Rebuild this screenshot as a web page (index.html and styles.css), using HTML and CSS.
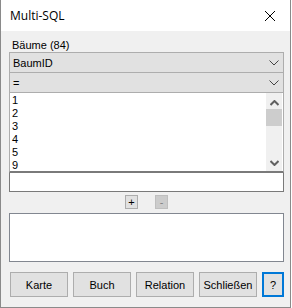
FILE: index.html
```html
<!DOCTYPE html>
<html lang="de">
<head>
    <meta charset="UTF-8">
    <title>Multi-SQL</title>
    <link rel="stylesheet" href="styles.css">
</head>
<body>
    <div class="window">
        <div class="titlebar">
            <span class="title">Multi-SQL</span>
            <svg class="close" width="12" height="12" viewBox="0 0 12 12">
                <path d="M1 1L11 11M11 1L1 11" stroke="#000" stroke-width="1"/>
            </svg>
        </div>
        <div class="content">
            <div class="caption">Bäume (84)</div>
            <div class="combo">
                <span>BaumID</span>
                <svg width="10" height="6" viewBox="0 0 10 6"><path d="M0.5 0.5L5 5L9.5 0.5" fill="none" stroke="#444"/></svg>
            </div>
            <div class="combo">
                <span>=</span>
                <svg width="10" height="6" viewBox="0 0 10 6"><path d="M0.5 0.5L5 5L9.5 0.5" fill="none" stroke="#444"/></svg>
            </div>
            <div class="listbox">
                <ul class="items">
                    <li>1</li>
                    <li>2</li>
                    <li>3</li>
                    <li>4</li>
                    <li>5</li>
                    <li>9</li>
                </ul>
                <div class="scrollbar">
                    <svg class="arrow" width="9" height="6" viewBox="0 0 9 6"><path d="M0.5 5L4.5 1L8.5 5" fill="none" stroke="#606060" stroke-width="2"/></svg>
                    <div class="thumb"></div>
                    <div class="track"></div>
                    <svg class="arrow" width="9" height="6" viewBox="0 0 9 6"><path d="M0.5 1L4.5 5L8.5 1" fill="none" stroke="#606060" stroke-width="2"/></svg>
                </div>
            </div>
            <div class="textbox"></div>
            <div class="addrow">
                <button class="small">+</button>
                <button class="small disabled">-</button>
            </div>
            <div class="memo"></div>
            <div class="buttons">
                <button class="btn">Karte</button>
                <button class="btn">Buch</button>
                <button class="btn">Relation</button>
                <button class="btn">Schließen</button>
                <button class="btn help">?</button>
            </div>
        </div>
    </div>
</body>
</html>
```
FILE: styles.css
```css
body {
    margin: 0;
    background: #fff;
    font-family: "Liberation Sans", Arial, sans-serif;
    font-size: 11px;
    color: #000;
}
.window {
    width: 291px;
    height: 308px;
    box-sizing: border-box;
    border: 1px solid #8a8a8a;
    border-top: none;
    background: #f0f0f0;
}
.titlebar {
    height: 31px;
    background: #fff;
    display: flex;
    align-items: center;
    justify-content: space-between;
    padding: 0 14px 0 9px;
}
.title {
    font-family: "Open Sans", "Noto Sans", sans-serif;
    font-size: 12px;
    margin-top: -1px;
}
.content {
    padding: 8px 6px 0 8px;
}
.caption {
    height: 13px;
    line-height: 13px;
    padding-left: 3px;
}
.combo {
    height: 19px;
    border: 1px solid #adadad;
    background: #e1e1e1;
    display: flex;
    align-items: center;
    justify-content: space-between;
    padding: 0 4px 0 3px;
}
.combo + .combo {
    border-top: none;
    height: 19px;
}
.listbox {
    height: 78px;
    border-left: 1px solid #adadad;
    border-right: 1px solid #adadad;
    border-bottom: 2px solid #7a7a7a;
    background: #fff;
    display: flex;
    justify-content: space-between;
}
.items {
    list-style: none;
    margin: 0;
    padding: 1px 0 0 2px;
}
.items li {
    height: 13px;
    line-height: 13px;
}
.scrollbar {
    width: 16px;
    margin-right: 1px;
    background: #f0f0f0;
    display: flex;
    flex-direction: column;
    align-items: center;
    padding-top: 7px;
    padding-bottom: 5px;
}
.arrow {
    flex: none;
}
.thumb {
    width: 16px;
    height: 17px;
    background: #cdcdcd;
    margin-top: 3px;
}
.track {
    flex: 1;
}
.textbox {
    height: 18px;
    border: 1px solid #7a7a7a;
    border-top: none;
    background: #fff;
}
.addrow {
    display: flex;
    justify-content: center;
    gap: 17px;
    padding: 3px 0 4px 0;
}
.small {
    width: 13px;
    height: 14px;
    padding: 0;
    margin: 0;
    border: 1px solid #adadad;
    background: #e1e1e1;
    font-family: "Liberation Sans", Arial, sans-serif;
    font-size: 11px;
    line-height: 11px;
    color: #000;
}
.small.disabled {
    border-color: #bfbfbf;
    background: #cccccc;
    color: #838383;
}
.memo {
    height: 47px;
    border: 1px solid #828790;
    background: #fff;
}
.buttons {
    display: flex;
    gap: 5px;
    margin-top: 10px;
    padding-left: 1px;
}
.btn {
    width: 58px;
    height: 25px;
    margin: 0;
    padding: 0;
    border: 1px solid #adadad;
    background: #e1e1e1;
    font-family: "Liberation Sans", Arial, sans-serif;
    font-size: 11px;
    color: #000;
}
.btn.help {
    width: 22px;
    border: 2px solid #0078d7;
}
```
